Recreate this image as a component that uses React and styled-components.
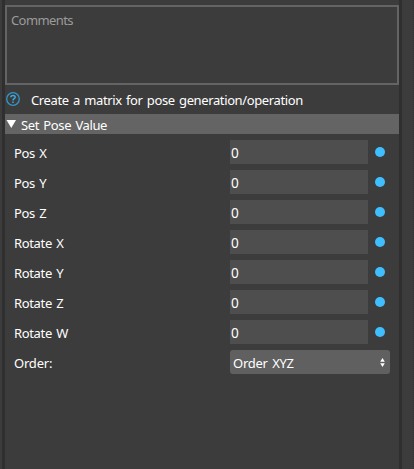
import React from "react";
import styled, { createGlobalStyle } from "styled-components";

const GlobalStyle = createGlobalStyle`
  * { box-sizing: border-box; }
  body {
    margin: 0;
    overflow: hidden;
    background: #3c3c3c;
    color: #fff;
    font: 13px/20px "Noto Sans", "Open Sans", sans-serif;
    letter-spacing: -0.38px;
    word-spacing: 1.3px;
  }
`;

const Window = styled.div`
  display: grid;
  grid-template-columns: 2px 3px 394px 3px 1fr;
  height: 469px;
`;

const Divider = styled.div`
  background: #2f2f2f;
`;

const Gutter = styled.div`
  border-right: ${(p) => (p.$marked ? "1px dotted #343434" : "none")};
`;

const Panel = styled.main`
  display: flex;
  flex-direction: column;
  padding-top: 5px;
`;

const Comments = styled.textarea`
  display: block;
  width: 100%;
  height: 80px;
  padding: 3px 4px;
  border: 2px solid #646464;
  border-radius: 0;
  outline: none;
  resize: none;
  background: #3c3c3c;
  color: #fff;
  font: inherit;
  letter-spacing: -0.6px;
  &::placeholder { color: #9b9b9b; opacity: 1; }
`;

const Hint = styled.div`
  display: flex;
  align-items: center;
  gap: 11px;
  height: 29px;
  padding-left: 1px;
  svg { display: block; margin-bottom: 1px; }
`;

const Text = styled.span`
  margin-top: ${(p) => p.$drop || "1px"};
  white-space: pre;
  letter-spacing: ${(p) => p.$spacing || "inherit"};
`;

const SectionHeader = styled.header`
  display: flex;
  align-items: center;
  gap: 4px;
  height: 20px;
  margin-bottom: 6px;
  padding-left: 1px;
  background: #646464;
`;

const Row = styled.label`
  display: grid;
  grid-template-columns: 216px 138px 10px;
  align-items: center;
  height: 24px;
  margin-bottom: 6px;
  padding-left: 9px;
`;

const NumberInput = styled.input`
  width: 138px;
  height: 24px;
  padding: 1px 1px 0;
  border: 0;
  outline: none;
  background: #4e4e4e;
  color: #fff;
  font: inherit;
  font-size: 13.6px;
`;

const Port = styled.i`
  width: 10px;
  height: 10px;
  margin: -1px 0 0 7px;
  border-radius: 50%;
  background: #3fbfff;
`;

const Select = styled.div`
  display: flex;
  align-items: center;
  justify-content: space-between;
  width: 160px;
  height: 24px;
  padding: 0 5px 0 3px;
  border-radius: 3px;
  background: #606060;
`;

const fields = ["Pos X", "Pos Y", "Pos Z", "Rotate X", "Rotate Y", "Rotate Z", "Rotate W"];

export default function App() {
  return (
    <>
      <GlobalStyle />
      <Window>
        <Gutter />
        <Divider />
        <Panel>
          <Comments placeholder="Comments" spellCheck={false} />
          <Hint>
            <svg width="14" height="14" viewBox="0 0 14 14" fill="none">
              <circle cx="7" cy="7" r="6.3" stroke="#3496c8" strokeWidth="1.3" />
              <path d="M4.8 5.3C4.8 2.8 9.2 2.8 9.2 5.2C9.2 6.7 7 6.7 7 8.4M7 9.4V11" stroke="#3ca9e0" strokeWidth="1.5" />
            </svg>
            <Text>Create a matrix for pose generation/operation</Text>
          </Hint>
          <SectionHeader>
            <svg width="11" height="8" viewBox="0 0 11 8">
              <path d="M.5 0H10L5.25 8Z" fill="#fff" />
            </svg>
            <Text $drop="2px">Set Pose Value</Text>
          </SectionHeader>
          {fields.map((name) => (
            <Row key={name}>
              <Text $drop="2px" $spacing="-0.35px">{name}</Text>
              <NumberInput defaultValue="0" />
              <Port />
            </Row>
          ))}
          <Row as="div">
            <Text $drop="2px" $spacing="-0.2px">Order:</Text>
            <Select>
              <Text $drop="2px" $spacing="-0.25px">Order XYZ</Text>
              <svg width="5" height="9" viewBox="0 0 5 9" fill="#fff">
                <path d="M2.5 0L4.8 3.7H.2ZM2.5 9L4.8 5.3H.2Z" />
              </svg>
            </Select>
          </Row>
        </Panel>
        <Divider />
        <Gutter $marked />
      </Window>
    </>
  );
}
